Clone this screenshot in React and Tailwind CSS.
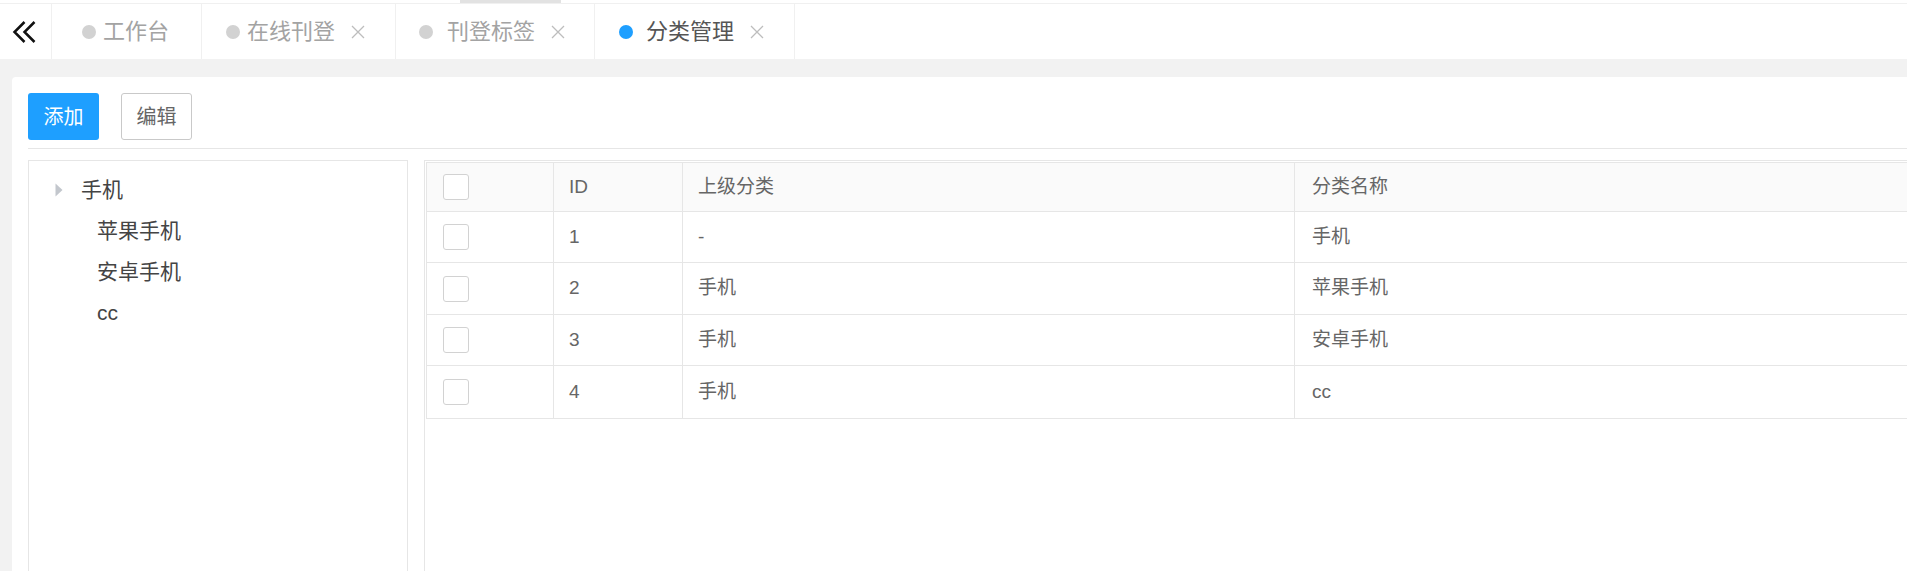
import React from "react";

const FONT = "font-['Liberation_Sans','Noto_Sans_CJK_SC',sans-serif]";

function CloseX() {
  return (
    <svg width="14" height="14" viewBox="0 0 14 14" className="shrink-0">
      <path d="M1 1 L13 13 M13 1 L1 13" stroke="#bdbdbd" strokeWidth="1.3" fill="none" />
    </svg>
  );
}

function Checkbox() {
  return <div className="w-[26px] h-[26px] rounded-[3px] border border-[#d2d2d2] bg-white" />;
}

const rows = [
  { id: "1", parent: "-", name: "手机" },
  { id: "2", parent: "手机", name: "苹果手机" },
  { id: "3", parent: "手机", name: "安卓手机" },
  { id: "4", parent: "手机", name: "cc" },
];

export default function App() {
  return (
    <div className={`w-screen h-[571px] overflow-hidden bg-[#f2f2f2] ${FONT}`}>
      <div className="w-[1960px]">
        {/* top header */}
        <div className="bg-white">
          <div className="h-[3px] flex">
            <div className="ml-[460px] w-[101px] bg-[#e2e2e2]" />
          </div>
          <div className="h-[56px] border-t border-[#f0f0f0] flex">
            <div className="w-[52px] border-r border-[#f0f0f0] flex items-center pl-[12px]">
              <svg width="26" height="24" viewBox="0 0 26 24">
                <path d="M12.5 2 L2.5 12 L12.5 22 M22.5 2 L12.5 12 L22.5 22" stroke="#111" strokeWidth="2.5" fill="none" />
              </svg>
            </div>
            <div className="w-[150px] border-r border-[#f0f0f0] flex items-center pl-[30px]">
              <span className="w-[14px] h-[14px] rounded-full bg-[#d2d2d2] shrink-0" />
              <span className="ml-[7px] text-[22px] text-[#a3a3a3] leading-none">工作台</span>
            </div>
            <div className="w-[194px] border-r border-[#f0f0f0] flex items-center pl-[24px]">
              <span className="w-[14px] h-[14px] rounded-full bg-[#d2d2d2] shrink-0" />
              <span className="ml-[7px] text-[22px] text-[#a3a3a3] leading-none">在线刊登</span>
              <span className="ml-[16px] flex"><CloseX /></span>
            </div>
            <div className="w-[199px] border-r border-[#f0f0f0] flex items-center pl-[23px]">
              <span className="w-[14px] h-[14px] rounded-full bg-[#d2d2d2] shrink-0" />
              <span className="ml-[14px] text-[22px] text-[#a3a3a3] leading-none">刊登标签</span>
              <span className="ml-[16px] flex"><CloseX /></span>
            </div>
            <div className="w-[200px] border-r border-[#f0f0f0] flex items-center pl-[24px]">
              <span className="w-[14px] h-[14px] rounded-full bg-[#1e9fff] shrink-0" />
              <span className="ml-[13px] text-[22px] text-[#555555] leading-none">分类管理</span>
              <span className="ml-[16px] flex"><CloseX /></span>
            </div>
          </div>
        </div>

        {/* body */}
        <div className="pt-[18px] pl-[12px]">
          <div className="bg-white rounded-[4px] h-[520px] pt-[16px] pl-[16px]">
            <div className="flex gap-[22px]">
              <button className="w-[71px] h-[47px] rounded-[3px] bg-[#1e9fff] text-white text-[20px] leading-none">添加</button>
              <button className="w-[71px] h-[47px] rounded-[3px] border border-[#c9c9c9] bg-white text-[#666666] text-[20px] leading-none">编辑</button>
            </div>
            <div className="mt-[8px] h-px bg-[#e6e6e6]" />
            <div className="mt-[11px] flex gap-[16px]">
              {/* tree */}
              <div className="w-[380px] h-[420px] border border-[#e6e6e6] pt-[8px] text-[21px] text-[#444444]">
                <div className="h-[41px] flex items-center pl-[26px]">
                  <svg width="8" height="14" viewBox="0 0 8 14" className="shrink-0">
                    <path d="M0.5 0.5 L7.5 7 L0.5 13.5 Z" fill="#c3c7cd" />
                  </svg>
                  <span className="ml-[18px] leading-none">手机</span>
                </div>
                <div className="h-[41px] flex items-center pl-[68px] leading-none">苹果手机</div>
                <div className="h-[41px] flex items-center pl-[68px] leading-none">安卓手机</div>
                <div className="h-[41px] flex items-center pl-[68px] leading-none">cc</div>
              </div>
              {/* table */}
              <div className="flex-1 h-[420px] border border-[#e6e6e6] p-px">
                <div className="border border-[#e6e6e6] text-[19px] text-[#666666]">
                  <div className="flex h-[49px] bg-[#fafafa] border-b border-[#e6e6e6]">
                    <div className="w-[127px] border-r border-[#e6e6e6] flex items-center pl-[16px]"><Checkbox /></div>
                    <div className="w-[129px] border-r border-[#e6e6e6] flex items-center px-[15px]">ID</div>
                    <div className="w-[612px] border-r border-[#e6e6e6] flex items-center px-[15px]">上级分类</div>
                    <div className="flex-1 flex items-center px-[17px]">分类名称</div>
                  </div>
                  {rows.map((r, i) => (
                    <div key={r.id} className={`flex ${i % 2 === 0 ? "h-[51px]" : "h-[52px]"} ${i < rows.length - 1 ? "border-b border-[#e6e6e6]" : ""}`}>
                      <div className="w-[127px] border-r border-[#e6e6e6] flex items-center pl-[16px]"><Checkbox /></div>
                      <div className="w-[129px] border-r border-[#e6e6e6] flex items-center px-[15px]">{r.id}</div>
                      <div className="w-[612px] border-r border-[#e6e6e6] flex items-center px-[15px]">{r.parent}</div>
                      <div className="flex-1 flex items-center px-[17px]">{r.name}</div>
                    </div>
                  ))}
                </div>
              </div>
            </div>
          </div>
        </div>
      </div>
    </div>
  );
}
